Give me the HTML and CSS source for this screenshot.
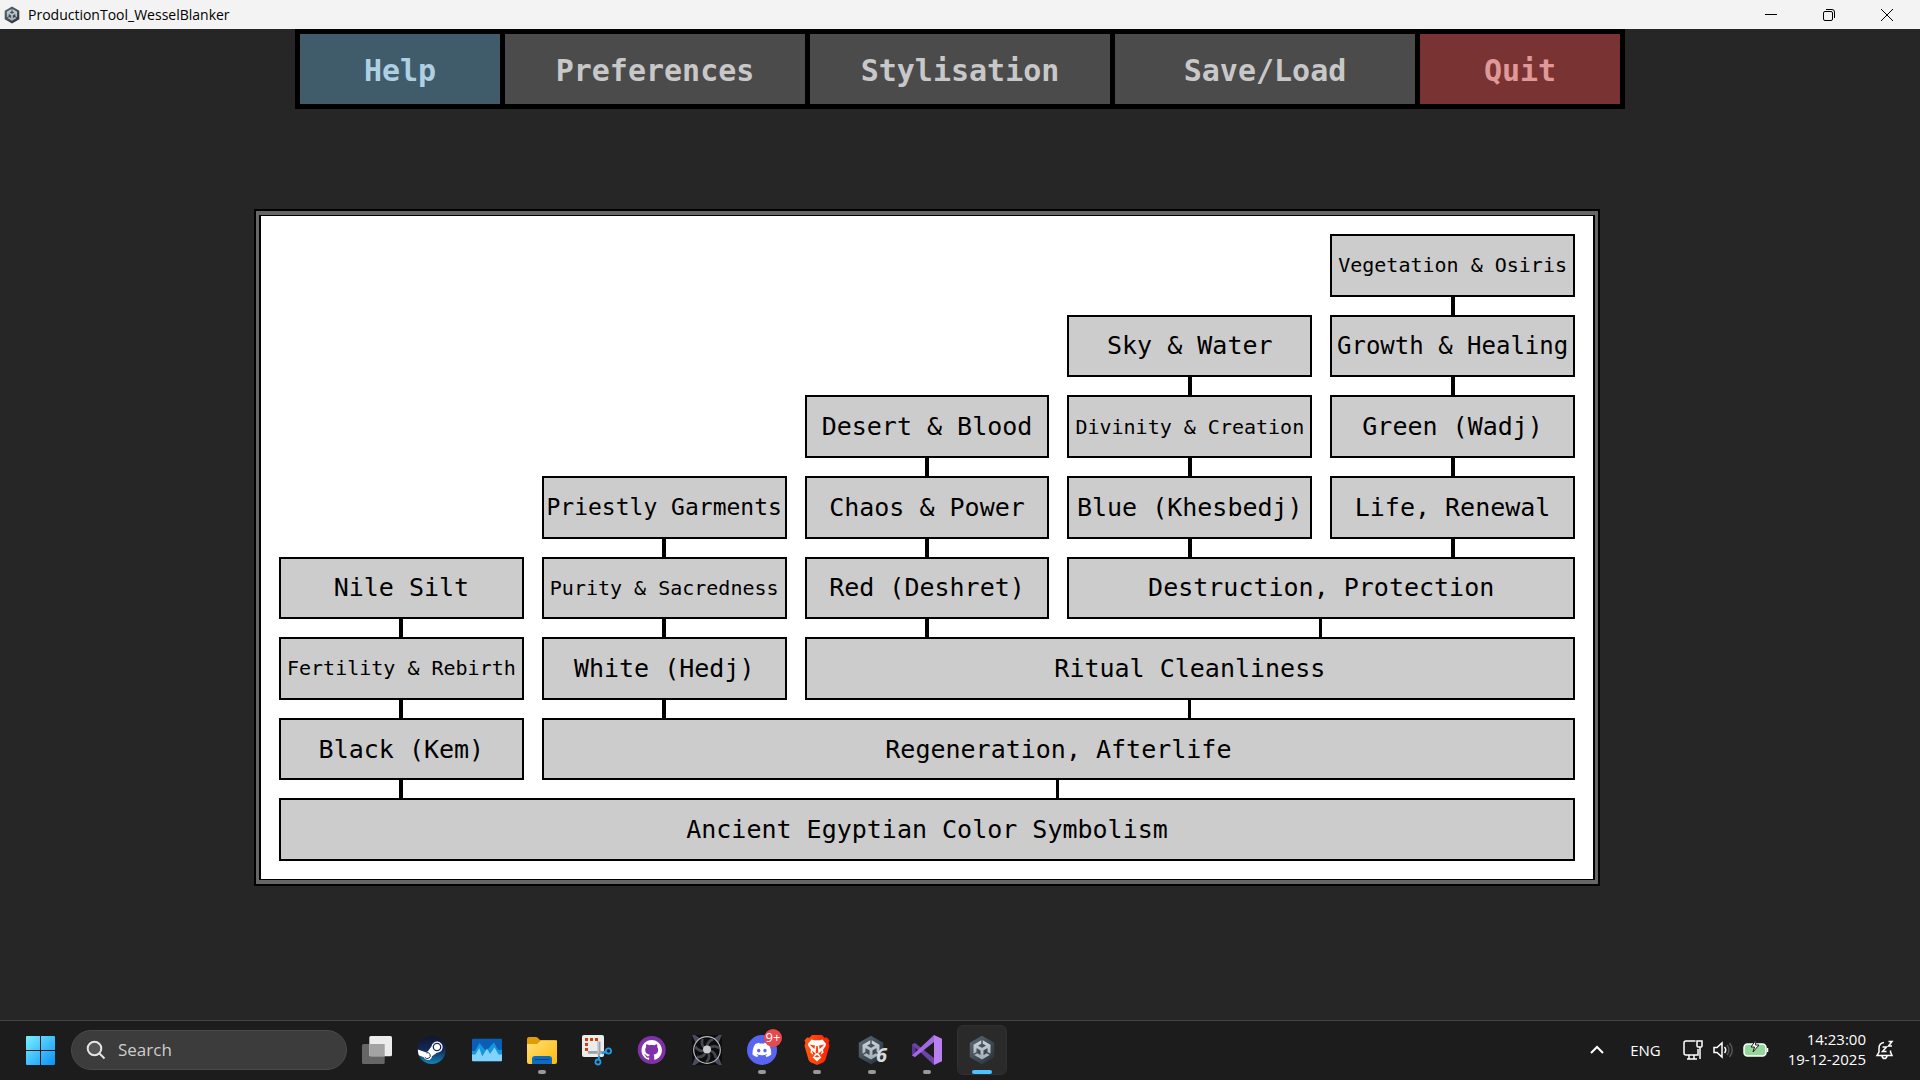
FILE: index.html
```html
<!DOCTYPE html>
<html lang="en">
<head>
    <meta charset="UTF-8">
    <meta name="viewport" content="width=device-width, initial-scale=1.0">
    <title>ProductionTool_WesselBlanker</title>
    <link rel="stylesheet" href="styles.css">
</head>
<body>
    <!-- Shared shapes -->
    <svg class="sprites" aria-hidden="true">
        <defs>
            <linearGradient id="hex-fill" x1="0" y1="0" x2="1" y2="1">
                <stop offset="0" stop-color="#5d6c78"/>
                <stop offset="1" stop-color="#262e35"/>
            </linearGradient>
            <linearGradient id="cube-fill" x1="0" y1="0" x2="0" y2="1">
                <stop offset="0" stop-color="#c9d1d7"/>
                <stop offset="1" stop-color="#a3adb5"/>
            </linearGradient>
            <symbol id="unity" viewBox="0 0 30 30">
                <path fill="url(#hex-fill)" d="M15 .7 27.2 7.8v14.4L15 29.3 2.8 22.2V7.8z"/>
                <g transform="translate(5.4 5.2) scale(.8)">
                    <path fill="url(#cube-fill)" d="m12.9288 4.2939 3.7997 2.1929c.1366.077.1415.2905 0 .3675l-4.515 2.6076a.4192.4192 0 0 1-.4246 0L7.274 6.8543c-.139-.0745-.1415-.293 0-.3675l3.7972-2.193V0L1.3758 5.5977V16.793l3.7177-2.1456v-4.3858c-.0025-.1565.1813-.2682.318-.1838l4.5148 2.6076a.4252.4252 0 0 1 .2136.3676v5.2127c.0025.1565-.1813.2682-.3179.1838l-3.7996-2.1929-3.7178 2.1457L12 24l9.6954-5.5977-3.7178-2.1457-3.7996 2.1929c-.1341.082-.3229-.0248-.3179-.1838V13.053c0-.1565.087-.2956.2136-.3676l4.5149-2.6076c.134-.082.3228.0224.3179.1838v4.3858l3.7177 2.1456V5.5977L12.9288 0Z"/>
                </g>
            </symbol>
        </defs>
    </svg>

    <header class="titlebar">
        <svg class="titlebar-icon"><use href="#unity"/></svg>
        <h1 class="titlebar-name">ProductionTool_WesselBlanker</h1>
        <div class="window-controls">
            <button type="button" aria-label="Minimize">
                <svg viewBox="0 0 14 14"><path d="M1 6.5h12"/></svg>
            </button>
            <button type="button" aria-label="Restore">
                <svg viewBox="0 0 14 14"><rect x="1.5" y="3.5" width="9" height="9" rx="1.5"/><path d="M4 1.500h6a2.500 2.500 0 0 1 2.500 2.500v6"/></svg>
            </button>
            <button type="button" aria-label="Close">
                <svg viewBox="0 0 14 14"><path d="m1 1 12 12M13 1 1 13"/></svg>
            </button>
        </div>
    </header>

    <main class="stage">
        <nav class="menu">
            <button type="button" class="menu-help">Help</button>
            <button type="button">Preferences</button>
            <button type="button">Stylisation</button>
            <button type="button">Save/Load</button>
            <button type="button" class="menu-quit">Quit</button>
        </nav>

        <div class="frame">
            <div class="board">
                <div class="cell r1 c5 small">Vegetation &amp; Osiris</div>

                <div class="cell r2 c4">Sky &amp; Water</div>
                <div class="cell r2 c5 snug">Growth &amp; Healing</div>

                <div class="cell r3 c3">Desert &amp; Blood</div>
                <div class="cell r3 c4 small">Divinity &amp; Creation</div>
                <div class="cell r3 c5">Green (Wadj)</div>

                <div class="cell r4 c2 fit">Priestly Garments</div>
                <div class="cell r4 c3">Chaos &amp; Power</div>
                <div class="cell r4 c4">Blue (Khesbedj)</div>
                <div class="cell r4 c5">Life, Renewal</div>

                <div class="cell r5 c1">Nile Silt</div>
                <div class="cell r5 c2 small">Purity &amp; Sacredness</div>
                <div class="cell r5 c3">Red (Deshret)</div>
                <div class="cell r5 c4 wide">Destruction, Protection</div>

                <div class="cell r6 c1 small">Fertility &amp; Rebirth</div>
                <div class="cell r6 c2">White (Hedj)</div>
                <div class="cell r6 c3 wide">Ritual Cleanliness</div>

                <div class="cell r7 c1">Black (Kem)</div>
                <div class="cell r7 c2 wide">Regeneration, Afterlife</div>

                <div class="cell r8 c1 wide root">Ancient Egyptian Color Symbolism</div>
            </div>
        </div>
    </main>

    <footer class="taskbar">
        <div class="apps">
            <button type="button" class="app" aria-label="Start">
                <svg viewBox="0 0 30 30">
                    <defs>
                        <linearGradient id="win" gradientUnits="userSpaceOnUse" x1="0" y1="0" x2="29" y2="29">
                            <stop offset="0" stop-color="#7df1ff"/>
                            <stop offset="1" stop-color="#0a93f8"/>
                        </linearGradient>
                    </defs>
                    <path fill="url(#win)" d="M1 1H14v14H0V2q0-1 1-1zM15 1H28q1 0 1 1v13H15zM0 16H14v14H1q-1 0-1-1zM15 16h14v13q0 1-1 1H15z"/>
                </svg>
            </button>

            <label class="search">
                <svg viewBox="0 0 20 20"><circle cx="8.500" cy="8.500" r="6.800"/><path d="m13.500 13.500 5 5"/></svg>
                <input type="text" placeholder="Search" aria-label="Search">
            </label>

            <button type="button" class="app" aria-label="Task view">
                <svg viewBox="0 0 30 30">
                    <rect y="9" width="22.700" height="20" rx="1.500" fill="#666"/>
                    <rect x="7.300" y="1" width="22.700" height="20.300" rx="1.500" fill="#ececec"/>
                    <path fill="#a3a3a3" d="M7.300 9h15.400v12.300H8.800q-1.500 0-1.500-1.500z"/>
                </svg>
            </button>

            <button type="button" class="app" aria-label="Steam">
                <svg viewBox="0 0 30 30">
                    <defs>
                        <linearGradient id="steam" x1="0" y1="0" x2="0" y2="1">
                            <stop offset="0" stop-color="#12152f"/>
                            <stop offset=".5" stop-color="#12295a"/>
                            <stop offset="1" stop-color="#1385b8"/>
                        </linearGradient>
                    </defs>
                    <circle cx="14.700" cy="15" r="14" fill="url(#steam)"/>
                    <path fill="#fff" d="M.900 14.500 8.500 17.200l2.300-.800 3.700-5.200a5.600 5.600 0 1 1 5.400 6.500L15 21.300a4.300 4.300 0 0 1-8.300 1L1.800 20.200Q.600 17.500.900 14.500z"/>
                    <circle cx="20" cy="12" r="3.700" fill="#fff" stroke="#152a58" stroke-width="1.300"/>
                    <path fill="none" stroke="#152a58" stroke-width="1" d="M9.200 17.800a3 3 0 1 1-1.400 4.500"/>
                </svg>
            </button>

            <button type="button" class="app" aria-label="Performance monitor">
                <svg viewBox="0 0 30 30">
                    <rect y="3.700" width="30" height="22.500" rx="1" fill="#0a5fb4"/>
                    <path fill="#1597dd" d="M0 16h3l4.500-8 4 5 3 3 4-5 3.500-3.500L26 15h4v8H0z"/>
                    <path fill="#83d2fb" d="M0 19.500h3.500L7.200 13l3 8.500 4.800-8 3 5.500 4.500-6.500 4 7H30v5.700q0 1-1 1H1q-1 0-1-1z"/>
                </svg>
            </button>

            <button type="button" class="app running" aria-label="File Explorer">
                <svg viewBox="0 0 30 30">
                    <defs>
                        <linearGradient id="folder" x1="0" y1="0" x2="1" y2="1">
                            <stop offset="0" stop-color="#ffe07a"/>
                            <stop offset="1" stop-color="#ffb90a"/>
                        </linearGradient>
                    </defs>
                    <path fill="#e09c05" d="M0 4q0-2 2-2h7q1.500 0 2.500 1.500L13 5h15q2 0 2 2v10H0z"/>
                    <path fill="url(#folder)" d="M0 9h10l4-3.500h16V27q0 2-2 2H2q-2 0-2-2z"/>
                    <path fill="#0f6cbd" d="M5 29v-5q0-3 3-3h14q3 0 3 3v5z"/>
                    <path stroke="#083f87" stroke-width="1.200" stroke-linecap="round" d="M8.500 24.500h13"/>
                </svg>
            </button>

            <button type="button" class="app" aria-label="Snipping Tool">
                <svg viewBox="0 0 30 30">
                    <rect width="22" height="22" rx="2" fill="#ececec"/>
                    <path fill="#d83b01" d="M3 3h3v3H3zM8 3h3v3H8zM13 3h3v3h-3zM3 8h3v3H3zM3 13h3v3H3z"/>
                    <path fill="#9aa3aa" d="M15.500 6.500h3V19L16 24zM6 16h13l5.500-.300-4.500 3H6z"/>
                    <path fill="#c8ced2" d="M15.500 6.500h1.300V18h-1.300z"/>
                    <circle cx="26.500" cy="16" r="2.600" fill="none" stroke="#1f9be6" stroke-width="1.800"/>
                    <circle cx="16" cy="27" r="2.500" fill="none" stroke="#1f9be6" stroke-width="1.800"/>
                    <path stroke="#1f9be6" stroke-width="2" d="m20 18.500 4-1.500M16.500 24.500l1-3.500"/>
                </svg>
            </button>

            <button type="button" class="app" aria-label="GitHub Desktop">
                <svg viewBox="0 0 30 30">
                    <circle cx="14.700" cy="15" r="14" fill="#8031a7"/>
                    <path fill="#fff" transform="translate(4.500 4.700) scale(.85)" d="M12 .297c-6.63 0-12 5.373-12 12 0 5.303 3.438 9.8 8.205 11.385.6.113.82-.258.82-.577 0-.285-.01-1.04-.015-2.04-3.338.724-4.042-1.61-4.042-1.61C4.422 18.07 3.633 17.7 3.633 17.7c-1.087-.744.084-.729.084-.729 1.205.084 1.838 1.236 1.838 1.236 1.07 1.835 2.809 1.305 3.495.998.108-.776.417-1.305.76-1.605-2.665-.3-5.466-1.332-5.466-5.93 0-1.31.465-2.38 1.235-3.22-.135-.303-.54-1.523.105-3.176 0 0 1.005-.322 3.3 1.23.96-.267 1.98-.399 3-.405 1.02.006 2.04.138 3 .405 2.28-1.552 3.285-1.23 3.285-1.23.645 1.653.24 2.873.12 3.176.765.84 1.23 1.91 1.23 3.22 0 4.61-2.805 5.625-5.475 5.92.42.36.81 1.096.81 2.22 0 1.606-.015 2.896-.015 3.286 0 .315.21.69.825.57C20.565 22.092 24 17.592 24 12.297c0-6.627-5.373-12-12-12"/>
                </svg>
            </button>

            <button type="button" class="app" aria-label="Fan Control">
                <svg viewBox="0 0 30 30">
                    <rect width="30" height="30" fill="#0d0d10"/>
                    <path fill="#4a4b5c" d="M0 0h3l6 4-5 5zM30 0h-3l-6 4 5 5zM0 30h3l6-4-5-5zM30 30h-3l-6-4 5-5z"/>
                    <circle cx="15" cy="15" r="13.300" fill="#0c0d0f" stroke="#b9bbbe" stroke-width="1.200"/>
                    <g fill="none" stroke="#45494d" stroke-width="2.600">
                        <path id="blade" d="M15 11q1-5 6-6.500"/>
                        <use href="#blade" transform="rotate(51 15 15)"/>
                        <use href="#blade" transform="rotate(103 15 15)"/>
                        <use href="#blade" transform="rotate(154 15 15)"/>
                        <use href="#blade" transform="rotate(206 15 15)"/>
                        <use href="#blade" transform="rotate(257 15 15)"/>
                        <use href="#blade" transform="rotate(309 15 15)"/>
                    </g>
                    <circle cx="15" cy="14.500" r="4" fill="#c9cbcd"/>
                </svg>
            </button>

            <button type="button" class="app running" aria-label="Discord">
                <svg viewBox="0 0 30 30">
                    <circle cx="15" cy="15" r="15" fill="#5865f2"/>
                    <path fill="#fff" transform="translate(5.500 5.500) scale(.78)" d="M20.317 4.3698a19.7913 19.7913 0 00-4.8851-1.5152.0741.0741 0 00-.0785.0371c-.211.3753-.4447.8648-.6083 1.2495-1.8447-.2762-3.68-.2762-5.4868 0-.1636-.3933-.4058-.8742-.6177-1.2495a.077.077 0 00-.0785-.037 19.7363 19.7363 0 00-4.8852 1.515.0699.0699 0 00-.0321.0277C.5334 9.0458-.319 13.5799.0992 18.0578a.0824.0824 0 00.0312.0561c2.0528 1.5076 4.0413 2.4228 5.9929 3.0294a.0777.0777 0 00.0842-.0276c.4616-.6304.8731-1.2952 1.226-1.9942a.076.076 0 00-.0416-.1057c-.6528-.2476-1.2743-.5495-1.8722-.8923a.077.077 0 01-.0076-.1277c.1258-.0943.2517-.1923.3718-.2914a.0743.0743 0 01.0776-.0105c3.9278 1.7933 8.18 1.7933 12.0614 0a.0739.0739 0 01.0785.0095c.1202.099.246.1981.3728.2924a.077.077 0 01-.0066.1276 12.2986 12.2986 0 01-1.873.8914.0766.0766 0 00-.0407.1067c.3604.698.7719 1.3628 1.225 1.9932a.076.076 0 00.0842.0286c1.961-.6067 3.9495-1.5219 6.0023-3.0294a.077.077 0 00.0313-.0552c.5004-5.177-.8382-9.6739-3.5485-13.6604a.061.061 0 00-.0312-.0286zM8.02 15.3312c-1.1825 0-2.1569-1.0857-2.1569-2.419 0-1.3332.9555-2.4189 2.157-2.4189 1.2108 0 2.1757 1.0952 2.1568 2.419 0 1.3332-.9555 2.4189-2.1569 2.4189zm7.9748 0c-1.1825 0-2.1569-1.0857-2.1569-2.419 0-1.3332.9554-2.4189 2.1569-2.4189 1.2108 0 2.1757 1.0952 2.1568 2.419 0 1.3332-.946 2.4189-2.1568 2.4189Z"/>
                </svg>
                <span class="badge">9+</span>
            </button>

            <button type="button" class="app running" aria-label="Brave">
                <svg viewBox="0 0 30 30">
                    <defs>
                        <linearGradient id="brave" x1="0" y1="0" x2="1" y2="0">
                            <stop offset="0" stop-color="#ff5a12"/>
                            <stop offset="1" stop-color="#ff1f00"/>
                        </linearGradient>
                    </defs>
                    <path fill="url(#brave)" d="M10 0h10l2.500 2.700 2.500-.200 2.500 3-.900 2.500.900 2.800-4 14q-.500 1.500-2 2.400L15 30l-6.500-2.800q-1.500-.900-2-2.400l-4-14L3.400 8l-.900-2.500 2.500-3 2.500.200z"/>
                    <path fill="#fff" d="M9.500 4.500 12 5.200h6l2.500-.700 3.500 4.300-.300 2-2.700 4 .600 2.700-4 3.300 1.900 1.400-4.500 4.300-4.500-4.300 1.900-1.400-4-3.300.600-2.700-2.700-4-.300-2z"/>
                    <path fill="#ff3c08" d="m7.500 9.500 5.500 1-.700 3.500zM22.500 9.500l-5.500 1 .700 3.500zM10 15.500l3.700 3.200-2.200 1.800zM20 15.500l-3.700 3.200 2.200 1.800zM14.300 11h1.400l.600 6.500-1.300 1-1.300-1zM12.500 21.500l2.500-1.400 2.500 1.400-2.500 1z"/>
                </svg>
            </button>

            <button type="button" class="app running" aria-label="Unity 6">
                <svg viewBox="0 0 30 30"><use href="#unity" x="-1"/></svg>
                <span class="version">6</span>
            </button>

            <button type="button" class="app running" aria-label="Visual Studio">
                <svg viewBox="0 0 30 30">
                    <path fill="#5c3596" d="M0 9.500 3 8l5 4.500v5L3 22l-3-1.500z"/>
                    <path fill="#1c1c1c" d="M3.700 11.500v7l4-3.500z"/>
                    <path fill="#6d43a8" d="M3 8 22 23v7L0 9.500z"/>
                    <path fill="#a06be0" d="m0 20.500 3 1.500L22 7V0z"/>
                    <path fill="#b87ff0" d="M22 0l8 3.700v22.600L22 30z"/>
                </svg>
            </button>

            <button type="button" class="app running active" aria-label="ProductionTool">
                <svg viewBox="0 0 30 30"><use href="#unity"/></svg>
            </button>
        </div>

        <div class="tray">
            <button type="button" class="tray-more" aria-label="Show hidden icons">
                <svg viewBox="0 0 14 8"><path d="m1 7 6-6 6 6"/></svg>
            </button>
            <button type="button" class="tray-lang">ENG</button>
            <button type="button" class="tray-status" aria-label="Network, volume and battery">
                <svg class="net" viewBox="0 0 20 20">
                    <path d="M12.500 1H3Q1 1 1 3v10q0 2 2 2h12V9M6 15v4M11 15v4M4 19h10M14 1h5v5q0 1-1 1h-3q-1 0-1-1zM17 7v12"/>
                </svg>
                <svg class="volume" viewBox="0 0 20 20">
                    <path d="M1 7.500h3L9 3v14l-5-4.500H1zM11.500 7q2.500 3 0 6"/>
                    <path class="dim" d="M14 5q4 5 0 10M16.500 3q5.500 7 0 14"/>
                </svg>
                <svg class="battery" viewBox="0 0 26 20">
                    <rect class="charge" x="1" y="4" width="22" height="12" rx="3.500"/>
                    <path d="M24.500 8v4"/>
                    <path class="bolt" d="M13 0 8 7h3.500L10 12l6-7h-3.500z"/>
                </svg>
            </button>
            <button type="button" class="tray-clock">
                <time>14:23:00</time>
                <time>19-12-2025</time>
            </button>
            <button type="button" class="tray-bell" aria-label="Notifications">
                <svg viewBox="0 0 20 20">
                    <path d="M9 2.500Q4 3 4 8.500V12l-2 3.500h15L15.500 12v-1.500M7 16q.500 2.500 2.500 2.500T12 16M7.500 7h4l-4 4.500h4M13.500 1.500H17L13.500 6H17"/>
                </svg>
            </button>
        </div>
    </footer>
</body>
</html>
```

FILE: styles.css
```css
* {
    margin: 0;
    padding: 0;
    box-sizing: border-box;
}

body {
    min-height: 100vh;
    display: flex;
    flex-direction: column;
    background: #262626;
    font-family: 'Open Sans', 'Noto Sans', sans-serif;
}

button {
    border: none;
    background: none;
    color: inherit;
    font: inherit;
}

svg {
    display: block;
    overflow: visible;
}

.sprites {
    position: absolute;
    width: 0;
    height: 0;
}

/* Window title bar */
.titlebar {
    display: flex;
    align-items: center;
    height: 29px;
    padding: 0 4px 0 3px;
    background: #f3f3f3;
    color: #000;
}

.titlebar-icon {
    width: 18px;
    height: 20px;
}

.titlebar-name {
    margin-left: 7px;
    font-size: 14px;
    font-weight: 400;
}

.window-controls {
    display: flex;
    margin-left: auto;
}

.window-controls button {
    width: 58px;
    height: 29px;
    display: flex;
    align-items: center;
    justify-content: center;
}

.window-controls svg {
    width: 14px;
    height: 14px;
    fill: none;
    stroke: #000;
}

/* Main area */
.stage {
    flex: 1;
}

.menu {
    display: grid;
    grid-template-columns: 2fr 3fr 3fr 3fr 2fr;
    gap: 5px;
    max-width: 1330px;
    margin: 0 auto;
    padding: 5px;
    background: #000;
}

.menu button {
    height: 70px;
    padding-top: 2px;
    background: #4b4b4b;
    color: #c8c8c8;
    font: bold 30px 'DejaVu Sans Mono', monospace;
}

.menu .menu-help {
    background: #405c6a;
    color: #afcfe2;
}

.menu .menu-quit {
    background: #7a3333;
    color: #e09999;
}

.frame {
    margin: 100px 320px 0 254px;
    padding: 4px 3px;
    border: 2px solid #000;
    background: #666;
}

.board {
    display: grid;
    grid-template-columns: repeat(5, minmax(0, 1fr));
    grid-template-rows: repeat(8, 1fr);
    gap: 18px;
    aspect-ratio: 1336 / 665;
    padding: 18px;
    border: solid #000;
    border-width: 1px 2px;
    background: #fff;
}

.cell {
    position: relative;
    display: flex;
    align-items: center;
    justify-content: center;
    border: 2px solid #000;
    background: #ccc;
    color: #000;
    font: 25px 'DejaVu Sans Mono', monospace;
    white-space: nowrap;
}

/* Line down to the cell below */
.cell::after {
    content: '';
    position: absolute;
    top: 100%;
    left: calc(50% - 2px);
    width: 4px;
    height: 21px;
    background: #000;
}

.cell.wide::after {
    width: 3px;
}

.cell.root::after {
    display: none;
}

.snug {
    font-size: 24px;
}

.fit {
    font-size: 23px;
}

.small {
    font-size: 20px;
}

.r1 { grid-row: 1; }
.r2 { grid-row: 2; }
.r3 { grid-row: 3; }
.r4 { grid-row: 4; }
.r5 { grid-row: 5; }
.r6 { grid-row: 6; }
.r7 { grid-row: 7; }
.r8 { grid-row: 8; }

.c1 { grid-column-start: 1; }
.c2 { grid-column-start: 2; }
.c3 { grid-column-start: 3; }
.c4 { grid-column-start: 4; }
.c5 { grid-column-start: 5; }

.wide {
    grid-column-end: -1;
}

/* Taskbar */
.taskbar {
    display: flex;
    justify-content: space-between;
    height: 60px;
    padding: 0 16px 2px;
    border-top: 1px solid #444;
    background: #1c1c1c;
    color: #fff;
}

.apps,
.tray {
    display: flex;
    align-items: center;
    gap: 5px;
}

.app {
    position: relative;
    width: 50px;
    height: 50px;
    display: flex;
    align-items: center;
    justify-content: center;
    border-radius: 6px;
}

.app svg {
    width: 30px;
    height: 30px;
}

.app.running::after {
    content: '';
    position: absolute;
    bottom: 1px;
    width: 8px;
    height: 4px;
    border-radius: 2px;
    background: #999;
}

.app.active {
    border: 1px solid #303030;
    background: #2a2a2a;
}

.app.active::after {
    bottom: 0;
    width: 20px;
    background: #4cc2ff;
}

.badge {
    position: absolute;
    top: 4px;
    right: 5px;
    width: 18px;
    height: 18px;
    border-radius: 50%;
    background: #e5484d;
    font-size: 13px;
    line-height: 17px;
}

.version {
    position: absolute;
    right: 10px;
    bottom: 10px;
    color: #d5dade;
    font: italic bold 20px/20px 'Open Sans', sans-serif;
}

.search {
    display: flex;
    align-items: center;
    width: 276px;
    height: 40px;
    padding: 0 14px;
    border: 1px solid #4a4a4a;
    border-radius: 20px;
    background: #3c3c3c;
}

.search svg {
    flex: none;
    width: 20px;
    height: 20px;
    fill: #555;
    stroke: #e4e4e4;
    stroke-width: 2;
}

.search input {
    min-width: 0;
    flex: 1;
    margin-left: 12px;
    border: none;
    outline: none;
    background: none;
    color: #fff;
    font: 17px 'Open Sans', sans-serif;
}

.search input::placeholder {
    color: #cdcdcd;
}

.tray {
    gap: 0;
    font-size: 15px;
    line-height: 20px;
}

.tray svg {
    width: 20px;
    height: 20px;
    fill: none;
    stroke: #fff;
    stroke-width: 1.5;
}

.tray .tray-more svg {
    width: 14px;
    height: 8px;
    stroke-width: 2;
}

.tray-lang {
    margin-left: 26px;
}

.tray-status {
    display: flex;
    gap: 10px;
    margin-left: 22px;
}

.tray .battery {
    width: 26px;
}

.battery .charge {
    fill: #95d79a;
}

.battery .bolt {
    fill: #fff;
    stroke: #1c1c1c;
    stroke-width: 1;
}

.volume .dim {
    stroke: #555;
}

.tray-clock {
    display: flex;
    flex-direction: column;
    align-items: flex-end;
    margin-left: 19px;
    padding-bottom: 2px;
}

.tray-bell {
    margin: 0 9px;
}
```
